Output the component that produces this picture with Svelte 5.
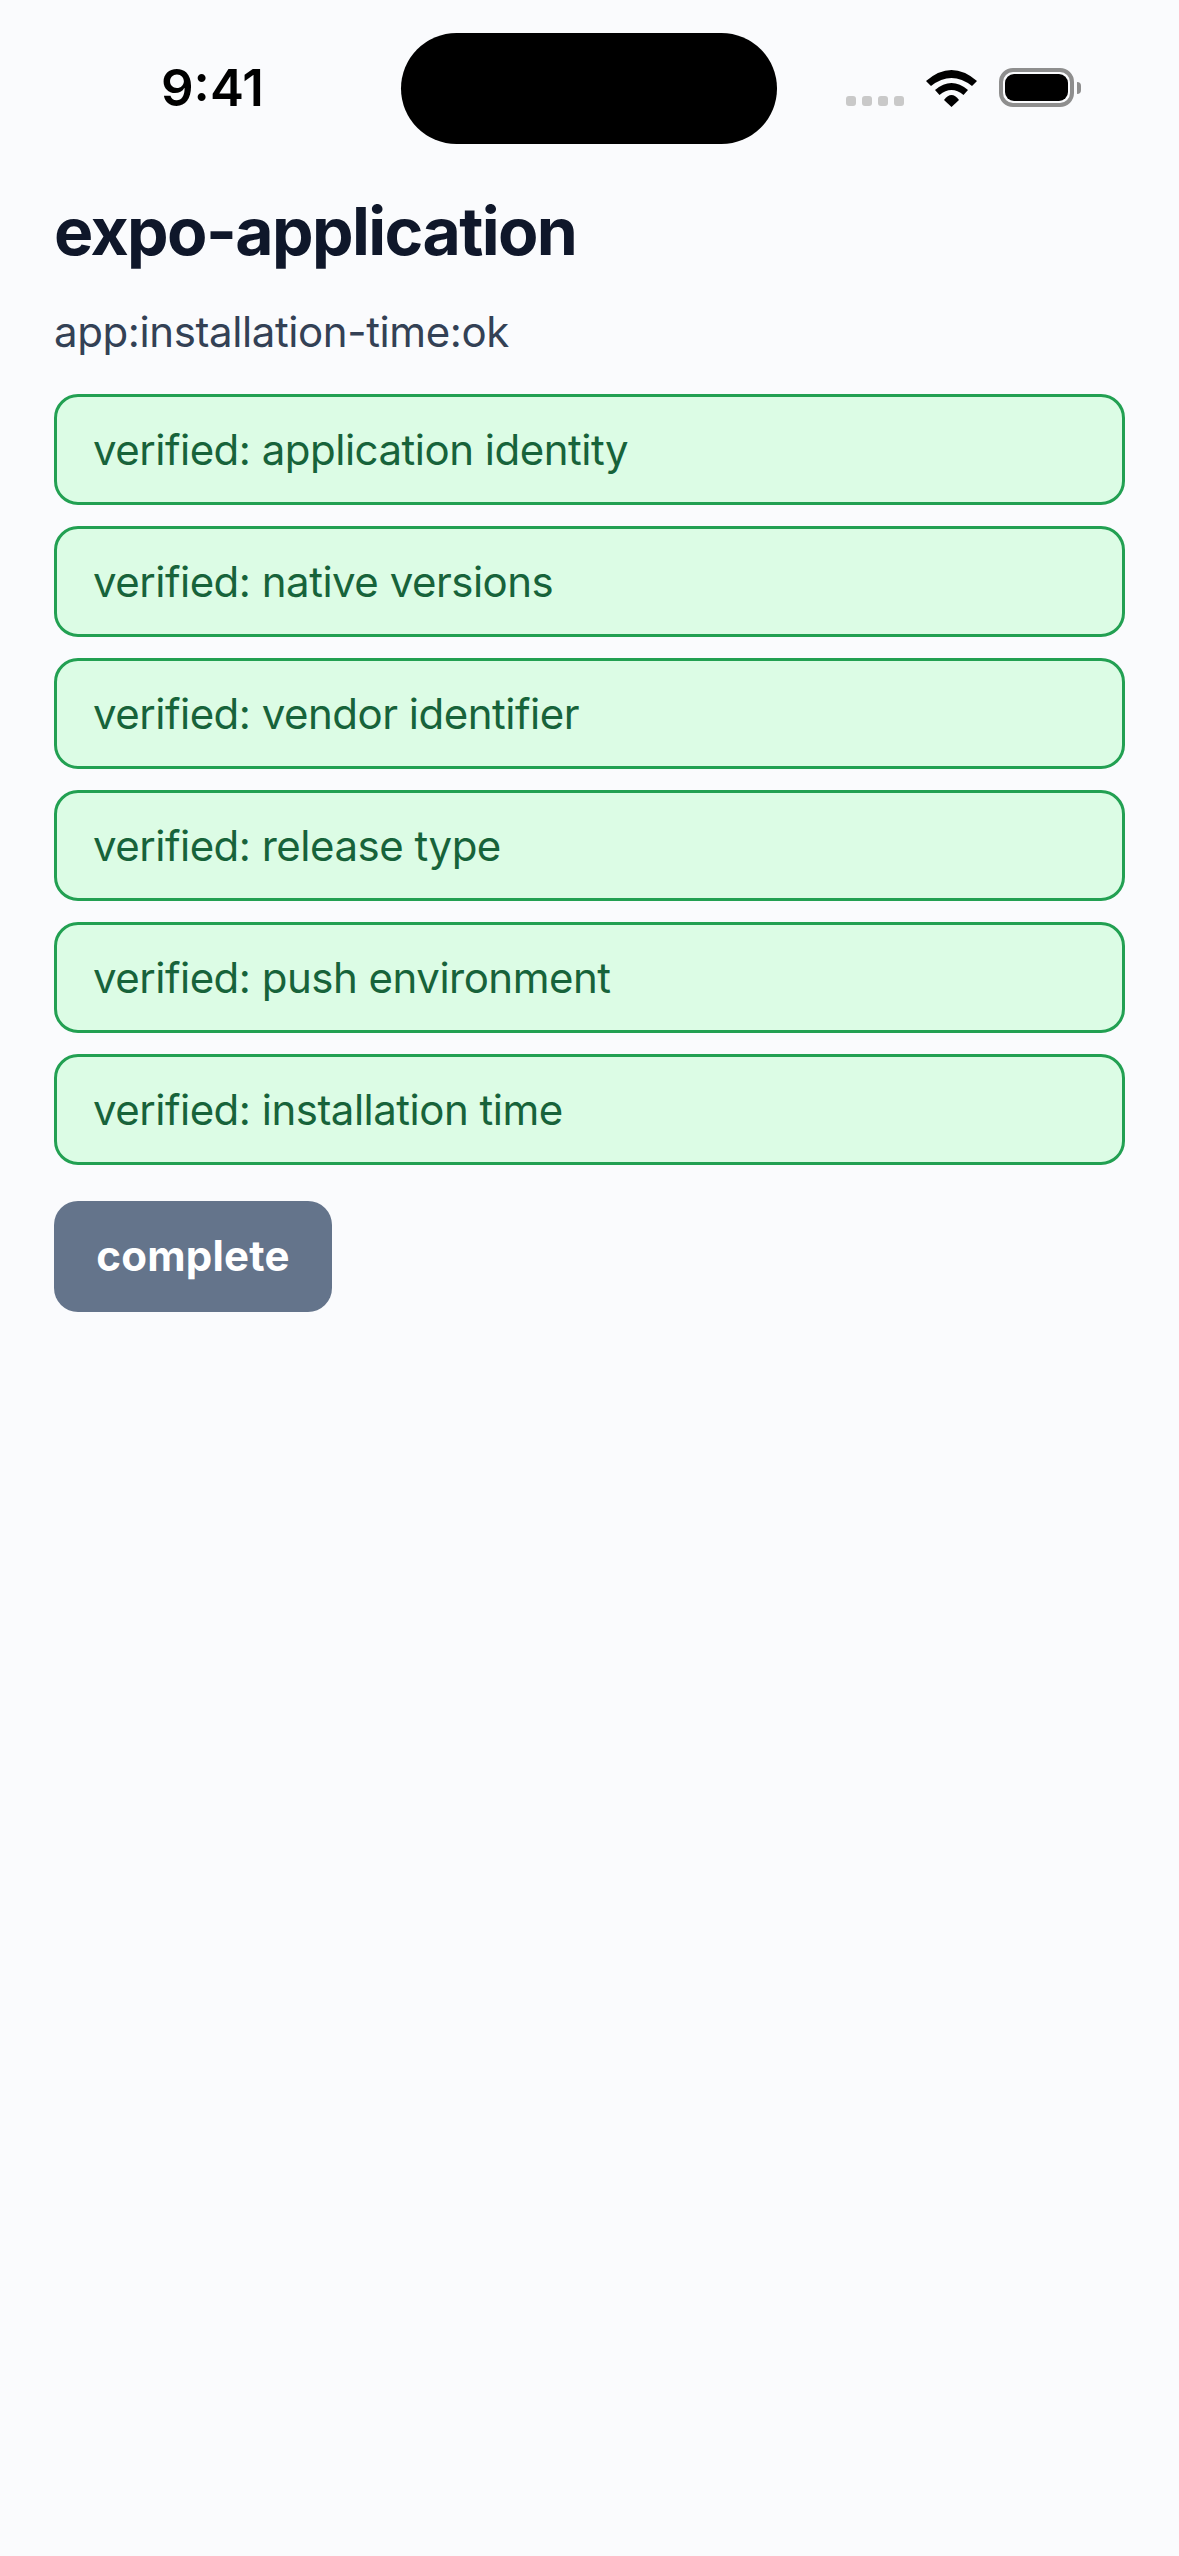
<script>
  const checks = [
    'application identity',
    'native versions',
    'vendor identifier',
    'release type',
    'push environment',
    'installation time'
  ];
</script>

<div class="screen">
  <header class="status">
    <span class="time">9:41</span>
    <div class="island"></div>
    <div class="indicators">
      <div class="dots"><i></i><i></i><i></i><i></i></div>
      <svg class="wifi" viewBox="0 0 51 37" aria-hidden="true">
        <path d="M0 11 Q25.5 -11 51 11 L46 16 Q25.5 0 5 16 Z" />
        <path d="M9 20 Q25.5 6 42 20 L37.5 25 Q25.5 15 13.5 25 Z" />
        <path d="M18 30 Q25.5 20 33 30 L25.5 37 Z" />
      </svg>
      <div class="battery"><div class="cell"><div class="charge"></div></div><div class="tip"></div></div>
    </div>
  </header>

  <main class="content">
    <h1>expo-application</h1>
    <p class="sub">app:installation-time:ok</p>
    <ul class="list">
      {#each checks as item}
        <li>verified: {item}</li>
      {/each}
    </ul>
    <button type="button">complete</button>
  </main>
</div>

<style>
  :global(body) {
    margin: 0;
    background: #fafbfd;
  }
  .screen {
    width: 1179px;
    min-height: 2556px;
    background: #fafbfd;
    font-family: Inter, "Noto Sans", sans-serif;
    box-sizing: border-box;
  }
  .status {
    height: 177px;
    box-sizing: border-box;
    padding: 33px 98px 0 161px;
    display: flex;
    justify-content: space-between;
    align-items: flex-start;
  }
  .time {
    width: 240px;
    font-size: 51px;
    font-weight: 600;
    line-height: 110px;
    color: #000;
    letter-spacing: 0;
  }
  .island {
    width: 376px;
    height: 111px;
    border-radius: 56px;
    background: #000;
    margin-right: 69px;
  }
  .indicators {
    display: flex;
    align-items: flex-end;
    padding-top: 35px;
    height: 39px;
  }
  .dots {
    display: flex;
    gap: 6px;
    margin-right: 22px;
    margin-bottom: 1px;
  }
  .dots i {
    width: 10px;
    height: 10px;
    border-radius: 3px;
    background: #c9c9c9;
  }
  .wifi {
    width: 51px;
    height: 37px;
    margin-right: 22px;
    fill: #000;
    display: block;
  }
  .battery {
    display: flex;
    align-items: center;
  }
  .cell {
    width: 75px;
    height: 39px;
    box-sizing: border-box;
    border: 4px solid #8e8e8e;
    border-radius: 14px;
    padding: 2px;
  }
  .charge {
    height: 100%;
    background: #000;
    border-radius: 9px;
  }
  .tip {
    width: 4px;
    height: 12px;
    margin-left: 3px;
    background: #8e8e8e;
    border-radius: 0 6px 6px 0;
  }
  .content {
    padding: 15px 54px 0;
  }
  h1 {
    margin: 0;
    font-size: 66px;
    line-height: 78px;
    font-weight: 700;
    letter-spacing: -1.6px;
    color: #0f172a;
  }
  .sub {
    margin: 35px 0 0;
    font-size: 42px;
    line-height: 54px;
    letter-spacing: -0.4px;
    color: #334155;
  }
  .list {
    list-style: none;
    margin: 35px 0 0;
    padding: 0;
    display: flex;
    flex-direction: column;
    gap: 21px;
  }
  li {
    height: 111px;
    box-sizing: border-box;
    display: flex;
    align-items: center;
    padding: 0 36px 1px;
    background: #dcfce5;
    border: 3px solid #22a052;
    border-radius: 24px;
    font-size: 42px;
    letter-spacing: -0.5px;
    color: #17633a;
  }
  button {
    display: block;
    margin-top: 36px;
    width: 278px;
    height: 111px;
    padding: 0 0 2px;
    border: 0;
    border-radius: 24px;
    background: #64748b;
    color: #fff;
    font-family: inherit;
    font-size: 42px;
    font-weight: 700;
    letter-spacing: 0.2px;
  }
</style>
